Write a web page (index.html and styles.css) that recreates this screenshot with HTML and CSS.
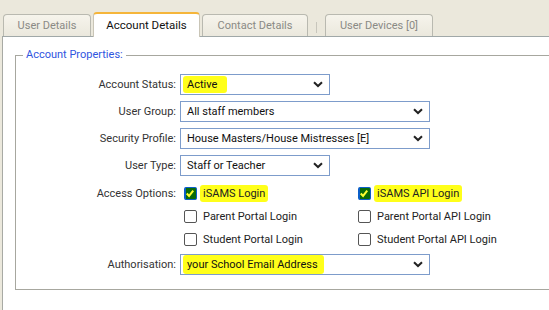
FILE: index.html
```html
<!DOCTYPE html>
<html>
<head>
<meta charset="utf-8">
<link rel="stylesheet" href="styles.css">
</head>
<body>
<div class="tabbar">
  <div class="tab">User Details</div>
  <div class="tab active">Account Details</div>
  <div class="tab">Contact Details</div>
  <div class="sep"></div>
  <div class="tab">User Devices [0]</div>
</div>
<div class="panel">
  <div class="fieldset">
    <div class="legend">Account Properties:</div>
    <div class="form">
      <div class="row">
        <label class="lbl">Account Status:</label>
        <div class="select short"><span class="hl hl-active">Active</span><svg class="chev" width="10" height="7" viewBox="0 0 10 7"><path d="M1 1.2 L5 5 L9 1.2" fill="none" stroke="#222" stroke-width="2"/></svg></div>
      </div>
      <div class="row">
        <label class="lbl">User Group:</label>
        <div class="select long"><span>All staff members</span><svg class="chev" width="10" height="7" viewBox="0 0 10 7"><path d="M1 1.2 L5 5 L9 1.2" fill="none" stroke="#222" stroke-width="2"/></svg></div>
      </div>
      <div class="row">
        <label class="lbl">Security Profile:</label>
        <div class="select long"><span>House Masters/House Mistresses [E]</span><svg class="chev" width="10" height="7" viewBox="0 0 10 7"><path d="M1 1.2 L5 5 L9 1.2" fill="none" stroke="#222" stroke-width="2"/></svg></div>
      </div>
      <div class="row">
        <label class="lbl">User Type:</label>
        <div class="select short"><span>Staff or Teacher</span><svg class="chev" width="10" height="7" viewBox="0 0 10 7"><path d="M1 1.2 L5 5 L9 1.2" fill="none" stroke="#222" stroke-width="2"/></svg></div>
      </div>
      <div class="row checks-row">
        <label class="lbl">Access Options:</label>
        <div class="checks">
          <div class="check"><span class="box checked"><svg width="13" height="13" viewBox="0 0 13 13"><path d="M3 6.5 L5.5 9.2 L10 3.5" fill="none" stroke="#ffff30" stroke-width="2.2"/></svg></span><span class="hl hl-login">iSAMS Login</span></div>
          <div class="check"><span class="box checked"><svg width="13" height="13" viewBox="0 0 13 13"><path d="M3 6.5 L5.5 9.2 L10 3.5" fill="none" stroke="#ffff30" stroke-width="2.2"/></svg></span><span class="hl hl-api">iSAMS API Login</span></div>
          <div class="check"><span class="box"></span><span>Parent Portal Login</span></div>
          <div class="check"><span class="box"></span><span>Parent Portal API Login</span></div>
          <div class="check"><span class="box"></span><span>Student Portal Login</span></div>
          <div class="check"><span class="box"></span><span>Student Portal API Login</span></div>
        </div>
      </div>
      <div class="row auth-row">
        <label class="lbl">Authorisation:</label>
        <div class="select long"><span class="hl hl-email">your School Email Address</span><svg class="chev" width="10" height="7" viewBox="0 0 10 7"><path d="M1 1.2 L5 5 L9 1.2" fill="none" stroke="#222" stroke-width="2"/></svg></div>
      </div>
    </div>
  </div>
</div>
</body>
</html>
```
FILE: styles.css
```css
* { box-sizing: border-box; }
html, body { margin: 0; padding: 0; }
body {
  width: 549px;
  height: 310px;
  overflow: hidden;
  background: #ebe8dc;
  font-family: Roboto, "Liberation Sans", sans-serif;
  font-size: 11px;
  color: #333;
}
.tabbar {
  display: flex;
  align-items: flex-end;
  height: 37px;
  padding-left: 3px;
  gap: 2px;
}
.tab {
  height: 22px;
  padding: 0;
  width: 88px;
  border: 1px solid #b9b9b0;
  border-bottom: none;
  border-radius: 4px 4px 0 0;
  background: linear-gradient(#f6f4ec, #ebe8dd);
  color: #8a8a85;
  display: flex;
  align-items: center;
  justify-content: center;
  font-size: 11px;
  margin-bottom: 1px;
}
.tab:nth-child(3) { width: 106px; }
.tab:nth-child(5) { width: 108px; }
.tab.active {
  width: 107px;
  height: 25px;
  margin-bottom: 0;
  background: #fff;
  border-color: #c9c5b7;
  border-top: 2px solid #f5b53a;
  color: #111;
  font-size: 11.5px;
  position: relative;
  z-index: 2;
  padding-bottom: 2px;
}
.sep {
  width: 1px;
  height: 11px;
  background: #c8c6bc;
  margin: 0 6px 4px 6px;
}
.panel {
  margin-left: 2px;
  margin-top: -1px;
  height: 274px;
  background: #fff;
  border-left: 1px solid #a8aaa4;
  border-top: 1px solid #a0a8a8;
  padding: 18px 0 0 12px;
  position: relative;
  z-index: 1;
}
.fieldset {
  position: relative;
  width: 560px;
  height: 235px;
  border: 1px solid #a7a79f;
  border-right: none;
}
.legend {
  position: absolute;
  top: -8px;
  left: 7px;
  padding: 0 3px;
  background: #fff;
  color: #2f55e0;
  font-size: 11px;
  line-height: 14px;
}
.form {
  padding-top: 18px;
  display: flex;
  flex-direction: column;
  gap: 6px;
}
.row {
  display: flex;
  align-items: center;
  gap: 4px;
}
.lbl {
  width: 160px;
  text-align: right;
  color: #333;
}
.select {
  height: 21px;
  border: 1px solid #7d9ccb;
  display: flex;
  align-items: center;
  justify-content: space-between;
  padding: 0 6px 0 6px;
  color: #111;
  background: #fff;
}
.select.short { width: 150px; }
.select.long { width: 250px; }
.chev { flex: none; margin-right: 0px; }
.hl {
  background: #ffff1a;
  border-radius: 3px;
}
.hl-active { margin-left: -4px; padding: 2px 10px 2px 4px; }
.hl-email { margin-left: -4px; padding: 3px 6px 3px 4px; }
.hl-login { padding: 2px 3px; margin-left: -3px; }
.hl-api { padding: 2px 3px; margin-left: -3px; }
.checks-row {
  align-items: flex-start;
  margin-top: 3px;
}
.checks-row .lbl { padding-top: 2px; }
.checks {
  display: grid;
  grid-template-columns: 174px 180px;
  row-gap: 7px;
  padding-left: 4px;
}
.check {
  display: flex;
  align-items: center;
  gap: 6px;
  height: 16px;
  color: #222;
}
.box {
  width: 13px;
  height: 13px;
  border: 1px solid #555;
  border-radius: 2px;
  background: #fff;
  flex: none;
  display: flex;
}
.box.checked {
  background: #0a6b08;
  border: 1px solid #0b5fc9;
  border-width: 1px 1px 1px 2px;
}
.box svg { margin: -1px 0 0 -2px; }
.auth-row { margin-top: 1px; }
```
